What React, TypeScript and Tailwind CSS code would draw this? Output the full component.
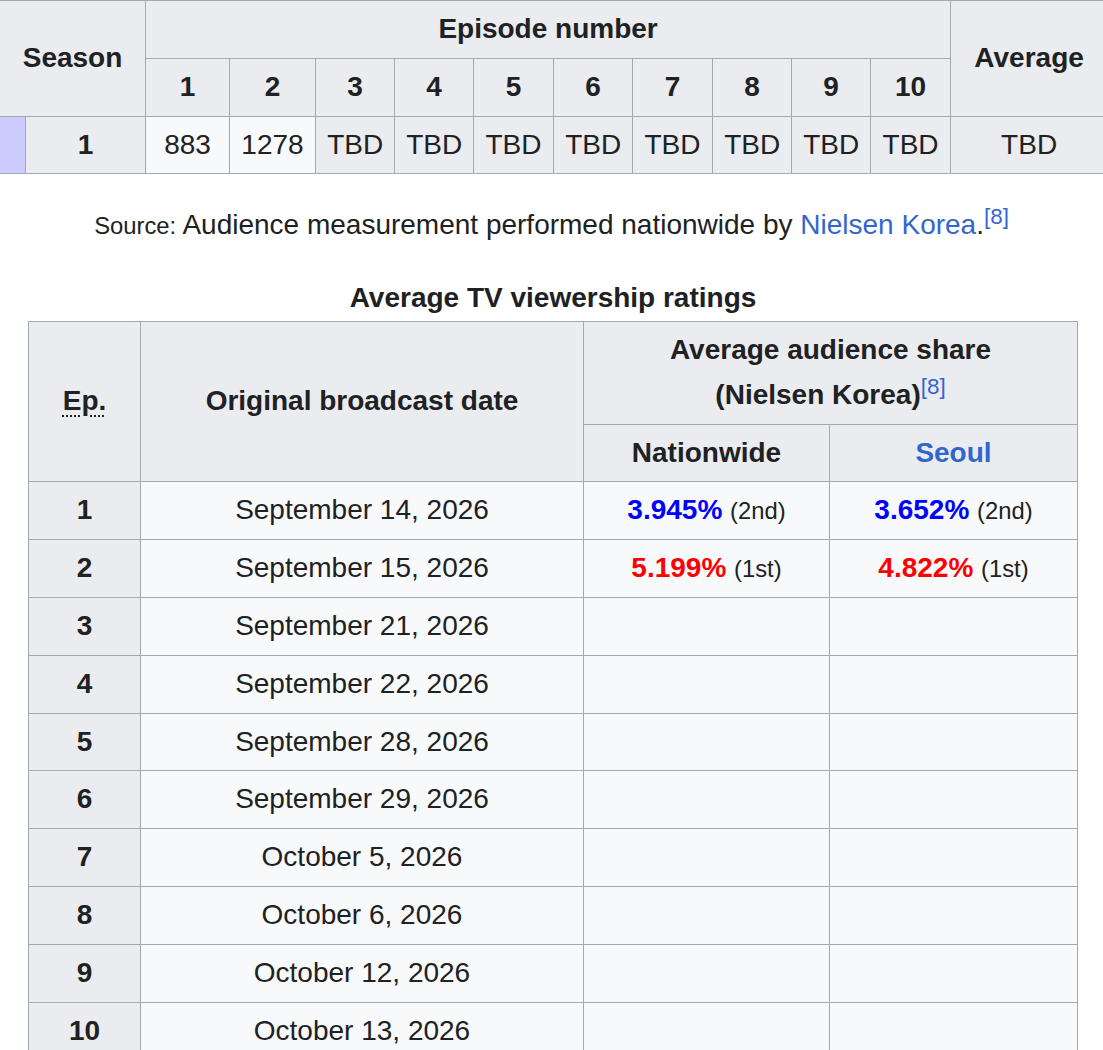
import React from "react";

const TH = "border border-[#a2a9b1] bg-[#eaecf0] font-bold text-center px-[11.2px] py-[6px]";
const TDG = "border border-[#a2a9b1] bg-[#eaecf0] text-center px-[11.2px] py-[6px]";
const TDL = "border border-[#a2a9b1] bg-[#f8f9fa] text-center px-[11.2px] py-[6px]";

const SUP = "relative top-[-0.45em] align-baseline text-[22.4px] leading-none font-normal text-[#3366cc]";

const dates = [
  "September 14, 2026",
  "September 15, 2026",
  "September 21, 2026",
  "September 22, 2026",
  "September 28, 2026",
  "September 29, 2026",
  "October 5, 2026",
  "October 6, 2026",
  "October 12, 2026",
  "October 13, 2026",
];

export default function App() {
  const eps = [1, 2, 3, 4, 5, 6, 7, 8, 9, 10];
  return (
    <div
      className="w-[1103px] h-[1050px] overflow-hidden bg-white text-[#202122] text-[28px] leading-[1.6]"
      style={{ fontFamily: '"Liberation Sans", Arial, sans-serif' }}
    >
      <table className="table-fixed border-collapse ml-[-1px] w-[1108px]">
        <colgroup>
          <col className="w-[26px]" />
          <col className="w-[120px]" />
          <col className="w-[84px]" />
          <col className="w-[86px]" />
          <col className="w-[79px]" />
          <col className="w-[79px]" />
          <col className="w-[80px]" />
          <col className="w-[79px]" />
          <col className="w-[80px]" />
          <col className="w-[79px]" />
          <col className="w-[79px]" />
          <col className="w-[80px]" />
          <col className="w-[157px]" />
        </colgroup>
        <thead>
          <tr>
            <th colSpan={2} rowSpan={2} className={TH}>
              Season
            </th>
            <th colSpan={10} className={TH}>
              Episode number
            </th>
            <th rowSpan={2} className={TH}>
              Average
            </th>
          </tr>
          <tr>
            {eps.map((n) => (
              <th key={n} className={TH}>
                {n}
              </th>
            ))}
          </tr>
        </thead>
        <tbody>
          <tr>
            <td className="border border-[#a2a9b1] bg-[#ccccff]"></td>
            <th className={TH}>1</th>
            <td className={TDL}>883</td>
            <td className={TDL}>1278</td>
            {[3, 4, 5, 6, 7, 8, 9, 10].map((n) => (
              <td key={n} className={TDG}>
                TBD
              </td>
            ))}
            <td className={TDG}>TBD</td>
          </tr>
        </tbody>
      </table>

      <div className="mt-[29px] text-center">
        <span className="text-[23.8px]">Source:</span> Audience measurement performed nationwide by{" "}
        <span className="text-[#3366cc]">Nielsen Korea</span>.<sup className={SUP}>[8]</sup>
      </div>

      <table className="table-fixed border-collapse ml-[28px] mt-[28px] w-[1049px]">
        <caption className="font-bold text-center">Average TV viewership ratings</caption>
        <colgroup>
          <col className="w-[112px]" />
          <col className="w-[443px]" />
          <col className="w-[246px]" />
          <col className="w-[248px]" />
        </colgroup>
        <thead>
          <tr>
            <th rowSpan={2} className={TH}>
              <span className="underline decoration-dotted decoration-2 underline-offset-[5px]">Ep.</span>
            </th>
            <th rowSpan={2} className={TH}>
              Original broadcast date
            </th>
            <th colSpan={2} className={TH}>
              Average audience share
              <br />
              (Nielsen Korea)<sup className={SUP}>[8]</sup>
            </th>
          </tr>
          <tr>
            <th className={TH}>Nationwide</th>
            <th className={TH + " !text-[#3366cc]"}>Seoul</th>
          </tr>
        </thead>
        <tbody>
          {dates.map((d, i) => (
            <tr key={d}>
              <th className={TH}>{i + 1}</th>
              <td className={TDL}>{d}</td>
              <td className={TDL}>
                {i === 0 && (
                  <>
                    <span className="font-bold text-[#0000ff]">3.945%</span>{" "}
                    <span className="text-[23.8px]">(2nd)</span>
                  </>
                )}
                {i === 1 && (
                  <>
                    <span className="font-bold text-[#ff0000]">5.199%</span>{" "}
                    <span className="text-[23.8px]">(1st)</span>
                  </>
                )}
              </td>
              <td className={TDL}>
                {i === 0 && (
                  <>
                    <span className="font-bold text-[#0000ff]">3.652%</span>{" "}
                    <span className="text-[23.8px]">(2nd)</span>
                  </>
                )}
                {i === 1 && (
                  <>
                    <span className="font-bold text-[#ff0000]">4.822%</span>{" "}
                    <span className="text-[23.8px]">(1st)</span>
                  </>
                )}
              </td>
            </tr>
          ))}
        </tbody>
      </table>
    </div>
  );
}
